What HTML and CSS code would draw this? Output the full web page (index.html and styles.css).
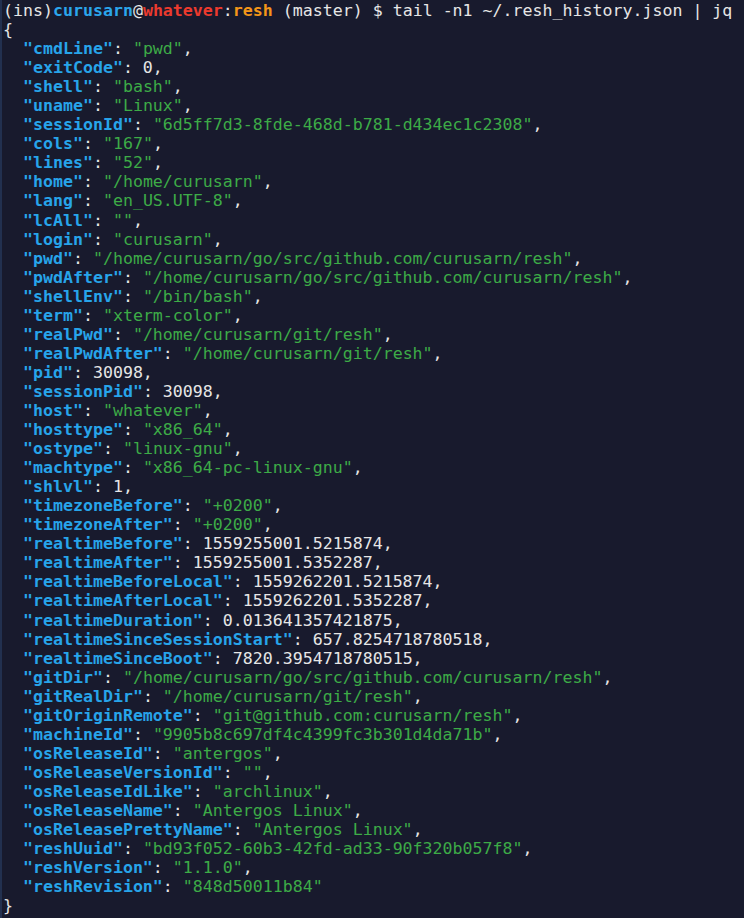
FILE: index.html
```html
<!DOCTYPE html>
<html>
<head>
<meta charset="utf-8">
<link rel="stylesheet" href="styles.css">
</head>
<body>
<pre class="term"><span class="w">(ins)</span><span class="user">curusarn</span><span class="w">@</span><span class="host">whatever</span><span class="w">:</span><span class="dir">resh</span><span class="w"> (master) $ tail -n1 ~/.resh_history.json | jq</span>
{
  <span class="k">"cmdLine"</span>: <span class="s">"pwd"</span>,
  <span class="k">"exitCode"</span>: 0,
  <span class="k">"shell"</span>: <span class="s">"bash"</span>,
  <span class="k">"uname"</span>: <span class="s">"Linux"</span>,
  <span class="k">"sessionId"</span>: <span class="s">"6d5ff7d3-8fde-468d-b781-d434ec1c2308"</span>,
  <span class="k">"cols"</span>: <span class="s">"167"</span>,
  <span class="k">"lines"</span>: <span class="s">"52"</span>,
  <span class="k">"home"</span>: <span class="s">"/home/curusarn"</span>,
  <span class="k">"lang"</span>: <span class="s">"en_US.UTF-8"</span>,
  <span class="k">"lcAll"</span>: <span class="s">""</span>,
  <span class="k">"login"</span>: <span class="s">"curusarn"</span>,
  <span class="k">"pwd"</span>: <span class="s">"/home/curusarn/go/src/github.com/curusarn/resh"</span>,
  <span class="k">"pwdAfter"</span>: <span class="s">"/home/curusarn/go/src/github.com/curusarn/resh"</span>,
  <span class="k">"shellEnv"</span>: <span class="s">"/bin/bash"</span>,
  <span class="k">"term"</span>: <span class="s">"xterm-color"</span>,
  <span class="k">"realPwd"</span>: <span class="s">"/home/curusarn/git/resh"</span>,
  <span class="k">"realPwdAfter"</span>: <span class="s">"/home/curusarn/git/resh"</span>,
  <span class="k">"pid"</span>: 30098,
  <span class="k">"sessionPid"</span>: 30098,
  <span class="k">"host"</span>: <span class="s">"whatever"</span>,
  <span class="k">"hosttype"</span>: <span class="s">"x86_64"</span>,
  <span class="k">"ostype"</span>: <span class="s">"linux-gnu"</span>,
  <span class="k">"machtype"</span>: <span class="s">"x86_64-pc-linux-gnu"</span>,
  <span class="k">"shlvl"</span>: 1,
  <span class="k">"timezoneBefore"</span>: <span class="s">"+0200"</span>,
  <span class="k">"timezoneAfter"</span>: <span class="s">"+0200"</span>,
  <span class="k">"realtimeBefore"</span>: 1559255001.5215874,
  <span class="k">"realtimeAfter"</span>: 1559255001.5352287,
  <span class="k">"realtimeBeforeLocal"</span>: 1559262201.5215874,
  <span class="k">"realtimeAfterLocal"</span>: 1559262201.5352287,
  <span class="k">"realtimeDuration"</span>: 0.013641357421875,
  <span class="k">"realtimeSinceSessionStart"</span>: 657.8254718780518,
  <span class="k">"realtimeSinceBoot"</span>: 7820.3954718780515,
  <span class="k">"gitDir"</span>: <span class="s">"/home/curusarn/go/src/github.com/curusarn/resh"</span>,
  <span class="k">"gitRealDir"</span>: <span class="s">"/home/curusarn/git/resh"</span>,
  <span class="k">"gitOriginRemote"</span>: <span class="s">"git@github.com:curusarn/resh"</span>,
  <span class="k">"machineId"</span>: <span class="s">"9905b8c697df4c4399fc3b301d4da71b"</span>,
  <span class="k">"osReleaseId"</span>: <span class="s">"antergos"</span>,
  <span class="k">"osReleaseVersionId"</span>: <span class="s">""</span>,
  <span class="k">"osReleaseIdLike"</span>: <span class="s">"archlinux"</span>,
  <span class="k">"osReleaseName"</span>: <span class="s">"Antergos Linux"</span>,
  <span class="k">"osReleasePrettyName"</span>: <span class="s">"Antergos Linux"</span>,
  <span class="k">"reshUuid"</span>: <span class="s">"bd93f052-60b3-42fd-ad33-90f320b057f8"</span>,
  <span class="k">"reshVersion"</span>: <span class="s">"1.1.0"</span>,
  <span class="k">"reshRevision"</span>: <span class="s">"848d50011b84"</span>
}
<span class="w">(ins)</span><span class="user">curusarn</span><span class="w">@</span><span class="host">whatever</span><span class="w">:</span><span class="dir">resh</span><span class="w"> (master) $ </span></pre>
</body>
</html>
```

FILE: styles.css
```css
html, body {
  margin: 0;
  padding: 0;
  background: #181a2d;
  height: 918px;
  overflow: hidden;
}
.term {
  margin: 0;
  padding: 1px 0 0 1px;
  border-left: 2px solid #22304f;
  height: 918px;
  box-sizing: border-box;
  overflow: hidden;
  font-family: "DejaVu Sans Mono", monospace;
  font-size: 16.6px;
  line-height: 19.04px;
  color: #e6e6e6;
  white-space: pre;
}
.w { color: #e6e6e6; }
.user { color: #2ba6ec; font-weight: bold; }
.host { color: #ec3a2e; font-weight: bold; }
.dir { color: #f49619; font-weight: bold; }
.k { color: #27a4ea; font-weight: bold; }
.s { color: #3dab47; }
```
